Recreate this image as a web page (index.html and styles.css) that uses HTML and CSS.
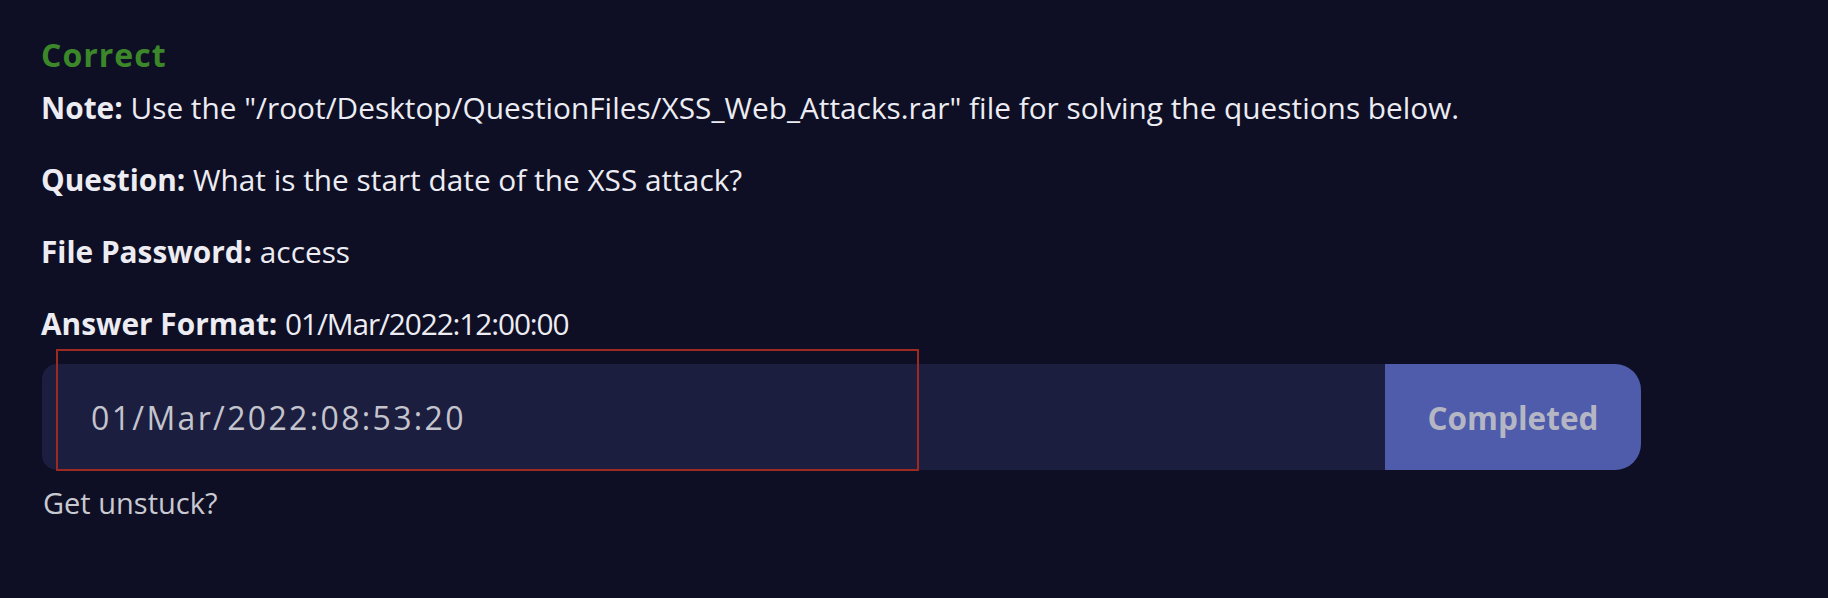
FILE: index.html
```html
<!DOCTYPE html>
<html lang="en">
<head>
<meta charset="utf-8">
<title>Question</title>
<link rel="stylesheet" href="styles.css">
</head>
<body>
<main class="task">
  <div class="status">Correct</div>
  <p class="line"><strong>Note:</strong> Use the "/root/Desktop/QuestionFiles/XSS_Web_Attacks.rar" file for solving the questions below.</p>
  <p class="line"><strong>Question:</strong> What is the start date of the XSS attack?</p>
  <p class="line"><strong>File Password:</strong> access</p>
  <p class="line"><strong>Answer Format:</strong> <span class="fmt">01/Mar/2022:12:00:00</span></p>
  <form class="answer-form">
    <input class="answer" type="text" value="01/Mar/2022:08:53:20" readonly>
    <button class="submit" type="button">Completed</button>
    <div class="highlight"></div>
  </form>
  <a class="unstuck">Get unstuck?</a>
</main>
</body>
</html>
```

FILE: styles.css
```css
html, body {
  margin: 0;
  padding: 0;
  background: #0e0f24;
}

body {
  font-family: "Open Sans", sans-serif;
  color: #ececf2;
}

.task {
  display: flex;
  flex-direction: column;
  align-items: flex-start;
  padding: 35px 0 0 41px;
}

.status {
  font-size: 32px;
  line-height: 40px;
  font-weight: 700;
  letter-spacing: 1px;
  color: #3b8729;
  margin-bottom: 15px;
}

.line {
  margin: 0 0 36px 0;
  font-size: 29.8px;
  line-height: 36px;
  font-weight: 400;
  white-space: nowrap;
}

.line:last-of-type {
  margin-bottom: 22px;
}

.line strong {
  font-weight: 700;
}

.fmt {
  letter-spacing: -1.1px;
}

.answer-form {
  position: relative;
  display: flex;
  width: 1599px;
  height: 106px;
  margin: 0 0 0 1px;
}

.answer {
  flex: 1;
  min-width: 0;
  height: 106px;
  box-sizing: border-box;
  margin: 0;
  border: none;
  outline: none;
  border-radius: 15px 0 0 15px;
  background: #1c1e40;
  padding: 0 0 0 49px;
  font-family: "Open Sans", sans-serif;
  font-size: 32px;
  letter-spacing: 2.35px;
  color: #c4c4cd;
}

.submit {
  width: 256px;
  height: 106px;
  margin: 0;
  border: none;
  border-radius: 0 26px 26px 0;
  background: #4f5bab;
  font-family: "Open Sans", sans-serif;
  font-size: 31.5px;
  font-weight: 700;
  color: #b5b6c4;
  padding: 0;
}

.highlight {
  position: absolute;
  left: 14px;
  top: -15px;
  width: 863px;
  height: 122px;
  box-sizing: border-box;
  border: 2px solid #9c2a21;
  pointer-events: none;
}

.unstuck {
  margin: 15px 0 0 2px;
  font-size: 29px;
  line-height: 36px;
  color: #c9c9d1;
}
```
